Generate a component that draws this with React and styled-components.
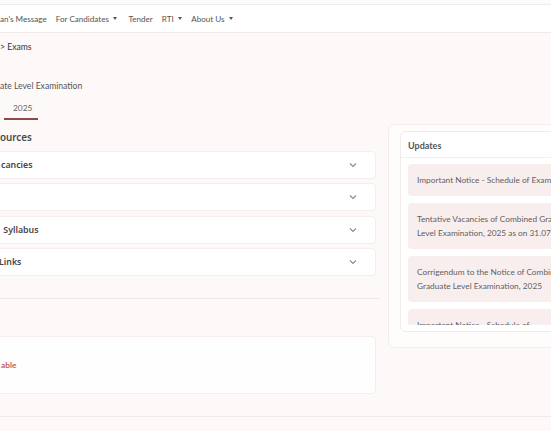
import React from 'react'
import styled, { createGlobalStyle } from 'styled-components'

const pageBg = '#fdf9f8'
const line = '#f1e9e7'

const GlobalStyle = createGlobalStyle`
  html, body {
    margin: 0;
    padding: 0;
    overflow: hidden;
    background: ${pageBg};
    font-family: Lato, "Noto Sans", sans-serif;
  }
`

const Page = styled.div`
  width: 551px;
  height: 431px;
  overflow: hidden;
`

const TopStrip = styled.div`
  height: 4px;
  background: #fbfbfb;
  border-bottom: 1px solid #ededed;
`

const Navbar = styled.nav`
  height: 27px;
  background: #fff;
  border-bottom: 1px solid ${line};
  display: flex;
  align-items: center;
  gap: 9px;
  font-size: 8.1px;
  color: #555;
`

const NavItem = styled.span`
  display: flex;
  align-items: center;
  gap: 4.5px;
  white-space: nowrap;
  margin-right: ${p => (p.wide ? '2px' : '0')};
`

const Caret = styled.span`
  width: 0;
  height: 0;
  border-left: 2.5px solid transparent;
  border-right: 2.5px solid transparent;
  border-top: 3px solid #555;
`

const Main = styled.div`
  display: flex;
  gap: 8px;
  width: 640px;
`

const LeftCol = styled.div`
  width: 380px;
  flex-shrink: 0;
`

const Breadcrumb = styled.div`
  margin-top: 9px;
  font-size: 8.6px;
  line-height: 10px;
  color: #333;
`

const PageTitle = styled.div`
  margin-top: 29px;
  font-size: 8.6px;
  line-height: 10px;
  color: #555;
`

const Tabs = styled.div`
  margin-top: 12px;
  display: flex;
`

const Tab = styled.div`
  width: 34px;
  margin-left: 4px;
  box-sizing: border-box;
  padding: 0 0 5px 9px;
  font-size: 8.4px;
  line-height: 10px;
  color: #666;
  border-bottom: ${p => (p.active ? '2.5px solid #8e4a44' : 'none')};
`

const SectionTitle = styled.h3`
  margin: 12px 0 0;
  font-family: "Noto Sans", sans-serif;
  font-weight: 600;
  font-size: 9.8px;
  line-height: 12px;
  color: #4a4a4a;
`

const Accordion = styled.div`
  margin-top: 7px;
  width: 376px;
  display: flex;
  flex-direction: column;
  gap: 4.3px;
`

const AccordionItem = styled.div`
  height: 28px;
  margin-left: -12px;
  padding: 0 18px 0 12px;
  background: #fff;
  border: 1px solid #f5eeec;
  border-radius: 4px;
  box-sizing: border-box;
  display: flex;
  align-items: center;
  justify-content: space-between;
  font-family: "Noto Sans", sans-serif;
  font-weight: 600;
  font-size: 8.8px;
  color: #474747;
`

const Label = styled.span`
  margin-left: ${p => (p.shift ? `-${p.shift}px` : '0')};
`

const Chevron = () => (
  <svg width="8" height="6" viewBox="0 0 8 6">
    <path d="M1 1.5 L4 4.5 L7 1.5" fill="none" stroke="#8a8a8a" strokeWidth="1.1" />
  </svg>
)

const Divider = styled.div`
  margin-top: 22px;
  height: 1px;
  background: ${line};
`

const NoticeCard = styled.div`
  margin-top: 37px;
  margin-left: -12px;
  width: 388px;
  height: 58px;
  padding-left: 12px;
  box-sizing: border-box;
  background: #fffefe;
  border: 1px solid #f5eeec;
  border-radius: 4px;
  display: flex;
  align-items: center;
  font-size: 8.4px;
  font-weight: 600;
  color: #c04b4b;
`

const RightCol = styled.aside`
  width: 224px;
  flex-shrink: 0;
  margin-top: 91px;
  height: 224px;
  padding: 6px 11px 0;
  box-sizing: border-box;
  background: #fffcfc;
  border: 1px solid #f4ecea;
  border-radius: 6px;
`

const UpdatesCard = styled.div`
  height: 199px;
  background: #fff;
  border: 1px solid #f3ebe9;
  border-radius: 6px;
  display: flex;
  flex-direction: column;
  overflow: hidden;
`

const UpdatesHeader = styled.div`
  padding: 9px 7px 6px;
  font-weight: 700;
  font-size: 9px;
  line-height: 10px;
  color: #555;
  border-bottom: 1px solid #f3efee;
`

const UpdatesList = styled.div`
  margin: 6px 0 0 7px;
  height: 161px;
  overflow: hidden;
  display: flex;
  flex-direction: column;
  gap: 7px;
`

const UpdateItem = styled.div`
  flex-shrink: 0;
  padding: 9px 9px;
  background: #f9eeee;
  border-radius: 4px;
  font-size: 8.3px;
  line-height: 14px;
  color: #5f5f5f;
`

const Footer = styled.div`
  margin-top: 22px;
  border-top: 1px solid ${line};
  height: 20px;
`

const updates = [
  'Important Notice - Schedule of Exam',
  'Tentative Vacancies of Combined Graduate Level Examination, 2025 as on 31.07.2025',
  'Corrigendum to the Notice of Combined Graduate Level Examination, 2025',
  'Important Notice - Schedule of Computer\u00a0Based\u00a0Examination of Combined Graduate Level Examination, 2025',
]

const resources = [
  { label: 'cancies', shift: 0 },
  { label: '', shift: 0 },
  { label: '\u00a0Syllabus', shift: 0 },
  { label: 'Links', shift: 2 },
]

export default function App() {
  return (
    <Page>
      <GlobalStyle />
      <TopStrip />
      <Navbar>
        <NavItem>an's Message</NavItem>
        <NavItem wide>For Candidates <Caret /></NavItem>
        <NavItem>Tender</NavItem>
        <NavItem>RTI <Caret /></NavItem>
        <NavItem>About Us <Caret /></NavItem>
      </Navbar>
      <Main>
        <LeftCol>
          <Breadcrumb>&gt; Exams</Breadcrumb>
          <PageTitle>ate Level Examination</PageTitle>
          <Tabs>
            <Tab active>2025</Tab>
          </Tabs>
          <SectionTitle>ources</SectionTitle>
          <Accordion>
            {resources.map((r, i) => (
              <AccordionItem key={i}>
                <Label shift={r.shift}>{r.label}</Label>
                <Chevron />
              </AccordionItem>
            ))}
          </Accordion>
          <Divider />
          <NoticeCard>able</NoticeCard>
        </LeftCol>
        <RightCol>
          <UpdatesCard>
            <UpdatesHeader>Updates</UpdatesHeader>
            <UpdatesList>
              {updates.map(u => (
                <UpdateItem key={u}>{u}</UpdateItem>
              ))}
            </UpdatesList>
          </UpdatesCard>
        </RightCol>
      </Main>
      <Footer />
    </Page>
  )
}
